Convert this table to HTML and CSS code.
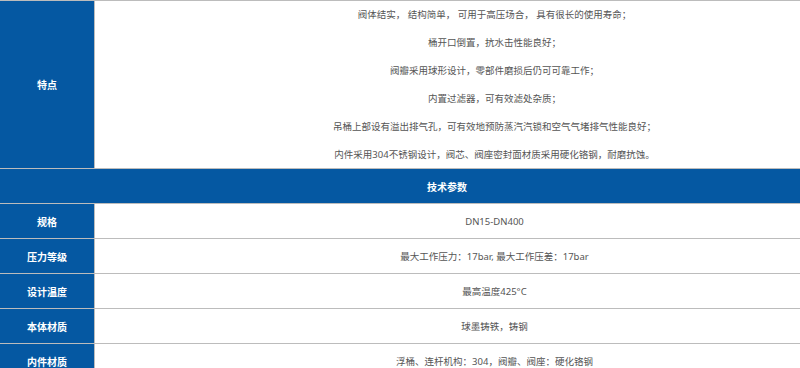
FILE: index.html
```html
<!DOCTYPE html>
<html lang="zh-CN">
<head>
<meta charset="utf-8">
<title>技术参数</title>
<link rel="stylesheet" href="styles.css">
</head>
<body>
<table class="spec">
  <tbody>
    <tr>
      <th class="label">特点</th>
      <td class="value features">
        <p>阀体结实， 结构简单， 可用于高压场合， 具有很长的使用寿命；</p>
        <p>桶开口倒置，抗水击性能良好；</p>
        <p>阀瓣采用球形设计，零部件磨损后仍可可靠工作；</p>
        <p>内置过滤器，可有效滤处杂质；</p>
        <p>吊桶上部设有溢出排气孔，可有效地预防蒸汽汽锁和空气气堵排气性能良好；</p>
        <p>内件采用304不锈钢设计，阀芯、阀座密封面材质采用硬化铬钢，耐磨抗蚀。</p>
      </td>
    </tr>
    <tr>
      <th class="section" colspan="2">技术参数</th>
    </tr>
    <tr>
      <th class="label">规格</th>
      <td class="value">DN15-DN400</td>
    </tr>
    <tr>
      <th class="label">压力等级</th>
      <td class="value">最大工作压力：17bar, 最大工作压差：17bar</td>
    </tr>
    <tr>
      <th class="label">设计温度</th>
      <td class="value">最高温度425°C</td>
    </tr>
    <tr>
      <th class="label">本体材质</th>
      <td class="value">球墨铸铁，铸钢</td>
    </tr>
    <tr>
      <th class="label">内件材质</th>
      <td class="value">浮桶、连杆机构：304，阀瓣、阀座：硬化铬钢</td>
    </tr>
  </tbody>
</table>
</body>
</html>
```
FILE: styles.css
```css
html, body {
  margin: 0;
  padding: 0;
  overflow: hidden;
  background: #ffffff;
}

body {
  font-family: "Noto Sans", "Noto Sans CJK SC", sans-serif;
  font-size: 10px;
  color: #555555;
}

.spec {
  border-collapse: collapse;
  width: 895px;
  table-layout: fixed;
}

.spec th,
.spec td {
  border: 1px solid #bcbcbc;
  padding: 0;
  text-align: center;
  vertical-align: middle;
}

.spec tr > :first-child {
  border-left: none;
}

.label {
  width: 94px;
  height: 34px;
  background: #0558a2;
  color: #ffffff;
  font-weight: bold;
  font-size: 10px;
}

.section {
  height: 34px;
  background: #0558a2;
  color: #ffffff;
  font-weight: bold;
  font-size: 10px;
}

.value {
  height: 34px;
  color: #555555;
  font-size: 9.5px;
}

.features {
  padding-top: 1px;
}

.features p {
  margin: 0;
  line-height: 28px;
}

.features p:last-child {
  line-height: 27px;
}
```
